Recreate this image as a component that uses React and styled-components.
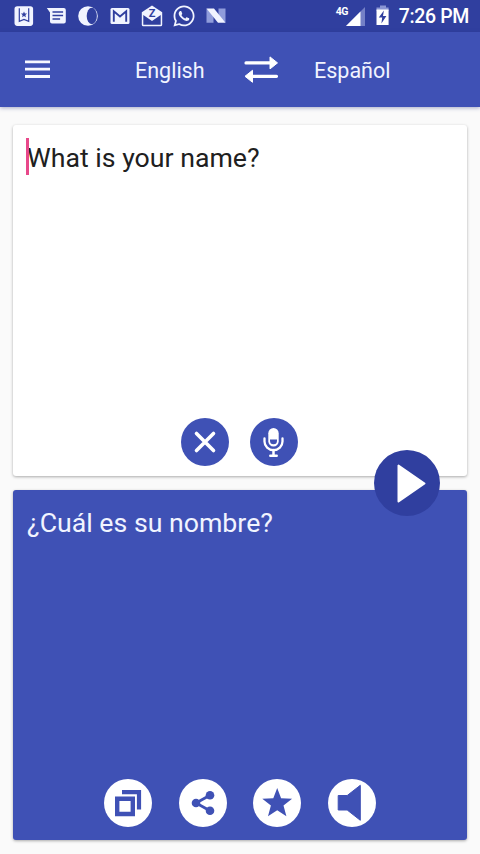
import React from 'react';
import styled, { createGlobalStyle } from 'styled-components';
import { FaWhatsapp } from 'react-icons/fa';

const primary = '#3f51b5';
const primaryDark = '#303f9f';

function StatusIcons() {
  return (
    <StyledStatusIcons>
      <svg width="32" height="32" viewBox="0 0 32 32">
        <rect x="6.5" y="6.3" width="18.6" height="19.6" rx="2.8" fill="#f1f4ff" />
        <path d="M11.3 8.200v13.200l4.700-2 4.700 2V8.200" fill="none" stroke={primaryDark} strokeWidth="1.200" />
        <path d="M16 11.400l.9 2 2.200.2-1.700 1.500.5 2.200-1.900-1.200-1.900 1.200.5-2.200-1.700-1.500 2.200-.2z" fill={primaryDark} />
      </svg>
      <svg width="32" height="32" viewBox="0 0 32 32">
        <path d="M6.800 8h17q2 0 2 2v11.400q0 2-2 2H12q-2 0-2-2V12.500z" fill="#f1f4ff" />
        <path d="M12.500 12.100h10.600M12.500 15.600h10.600M12.500 19h7.600" stroke={primaryDark} strokeWidth="1.500" />
      </svg>
      <svg width="32" height="32" viewBox="0 0 32 32">
        <circle cx="16" cy="16" r="9.800" fill="#f1f4ff" />
        <ellipse cx="19.800" cy="16" rx="5.100" ry="8.300" fill={primaryDark} />
      </svg>
      <svg width="32" height="32" viewBox="0 0 32 32">
        <rect x="6.500" y="8" width="19" height="16" rx="1.500" fill="#f1f4ff" />
        <path d="M9.800 21.800V11.200l6.200 5.200 6.200-5.200v10.600" fill="none" stroke={primaryDark} strokeWidth="1.900" />
      </svg>
      <svg width="32" height="32" viewBox="0 0 32 32">
        <path d="M5.800 12.300L16 5.500l10.200 6.800v12.500q0 1.500-1.500 1.500H7.300q-1.500 0-1.500-1.500z" fill="#f1f4ff" />
        <path d="M7.300 15L16 21l8.700-6v9.800H7.300z" fill={primaryDark} />
        <StyledBadgeText x="16" y="16.600" textAnchor="middle">Z</StyledBadgeText>
      </svg>
      <StyledIconSlot><FaWhatsapp size={24} /></StyledIconSlot>
      <svg width="32" height="32" viewBox="0 0 32 32">
        <path d="M6.500 8.500l7 5.200v9.100h-7zM18.500 8.500h7v14.300l-7-5.200z" fill="#8f9cdb" />
        <path d="M6.500 8.500h7.500l11.500 14.300H18z" fill="#f1f4ff" />
      </svg>
    </StyledStatusIcons>
  );
}

function StatusBar() {
  return (
    <StyledStatusBar>
      <StatusIcons />
      <StyledSystemInfo>
        <StyledNetwork>4G</StyledNetwork>
        <svg width="20" height="20" viewBox="0 0 20 20">
          <path d="M0 19L19 0v19z" fill="#7480c6" />
          <path d="M0 19L14.500 4.500V19z" fill="#fff" />
        </svg>
        <StyledBattery width="14" height="22" viewBox="0 0 14 22">
          <path d="M4 .5h6v2h2.600V6H.5V2.500H4z" fill="#8a95d3" />
          <path d="M.5 4.500h12.100V20H.5z" fill="#fff" />
          <path d="M7.900 5.500L2.800 12.500h3.400l-.8 6 5-7.500H7z" fill={primaryDark} />
        </StyledBattery>
        <StyledClock>7:26 PM</StyledClock>
      </StyledSystemInfo>
    </StyledStatusBar>
  );
}

function Toolbar() {
  return (
    <StyledToolbar>
      <StyledPlainButton aria-label="menu">
        <svg width="26" height="20" viewBox="0 0 26 20">
          <path d="M0 1.900h25M0 9.200h25M0 16.500h25" stroke="#f7f8ff" strokeWidth="2.800" />
        </svg>
      </StyledPlainButton>
      <StyledLanguage $width={70} $offset={84}>English</StyledLanguage>
      <StyledPlainButton $offset={39} aria-label="swap languages">
        <svg width="35" height="28" viewBox="0 0 35 28">
          <path d="M2 6.900H27M8 20.300h24.500" stroke="#fff" strokeWidth="3.200" strokeLinecap="round" />
          <path d="M26 .9L33.500 6.900l-7.500 6zM8.500 14.300l-7.500 6 7.500 6z" fill="#fff" stroke="#fff" strokeLinejoin="round" />
        </svg>
      </StyledPlainButton>
      <StyledLanguage $width={78} $offset={35}>Español</StyledLanguage>
    </StyledToolbar>
  );
}

function App() {
  return (
    <StyledScreen>
      <GlobalStyle />
      <StatusBar />
      <Toolbar />
      <StyledPanels>
        <StyledCard>
          <StyledPhrase $caret>What is your name?</StyledPhrase>
          <StyledActions $gap={21.5}>
            <StyledRound aria-label="clear">
              <svg width="48" height="48" viewBox="0 0 48 48">
                <path d="M15.500 15.500l17 17M32.500 15.500l-17 17" stroke="#fff" strokeWidth="3.600" strokeLinecap="round" />
              </svg>
            </StyledRound>
            <StyledRound aria-label="speak">
              <svg width="48" height="48" viewBox="0 0 48 48">
                <rect x="18.300" y="10" width="10.400" height="18.500" rx="5.200" fill="#fff" />
                <path d="M20 21.500h7v1.300a3.500 3.500 0 0 1-7 0z" fill={primary} />
                <path d="M14.500 20.500v3a9 8.600 0 0 0 18 0v-3" fill="none" stroke="#fff" strokeWidth="2.300" strokeLinecap="round" />
                <path d="M23.500 32v5M20.300 37.800h6.400" stroke="#fff" strokeWidth="2.500" strokeLinecap="round" />
              </svg>
            </StyledRound>
          </StyledActions>
          <StyledPlay aria-label="translate">
            <svg width="66" height="66" viewBox="0 0 66 66">
              <path d="M24.500 15.500v36L50.500 33.500z" fill="#fff" stroke="#fff" strokeWidth="2" strokeLinejoin="round" />
            </svg>
          </StyledPlay>
        </StyledCard>
        <StyledCard $filled>
          <StyledPhrase>¿Cuál es su nombre?</StyledPhrase>
          <StyledActions $gap={26.700}>
            <StyledRound $light aria-label="copy">
              <svg width="48" height="48" viewBox="0 0 48 48">
                <path d="M13.200 19.800h15.600v15.200H13.200z" fill="none" stroke={primary} strokeWidth="4.400" />
                <path d="M18 13.200h17v17.300" fill="none" stroke={primary} strokeWidth="4.200" />
              </svg>
            </StyledRound>
            <StyledRound $light aria-label="share">
              <svg width="48" height="48" viewBox="0 0 48 48">
                <path d="M31 16.300L17 24l14 7.700" fill="none" stroke={primary} strokeWidth="2.800" />
                <circle cx="31" cy="16.300" r="4.300" fill={primary} />
                <circle cx="17" cy="24" r="4.300" fill={primary} />
                <circle cx="31" cy="31.700" r="4.300" fill={primary} />
              </svg>
            </StyledRound>
            <StyledRound $light aria-label="favorite">
              <svg width="48" height="48" viewBox="0 0 48 48">
                <path d="M24.200 8.900l3.900 10.300 11 .5-8.600 6.900 2.900 10.700-9.200-6.100-9.200 6.100 2.900-10.700-8.600-6.900 11-.5z" fill={primary} />
              </svg>
            </StyledRound>
            <StyledRound $light aria-label="listen">
              <svg width="48" height="48" viewBox="0 0 48 48">
                <path d="M10.200 16.500h9L32.300 6.300v35L19.200 31h-9z" fill={primary} stroke={primary} strokeLinejoin="round" />
              </svg>
            </StyledRound>
          </StyledActions>
        </StyledCard>
      </StyledPanels>
    </StyledScreen>
  );
}

const GlobalStyle = createGlobalStyle`
  * {
    box-sizing: border-box;
  }
  body {
    margin: 0;
    background: #fafafa;
    font-family: Roboto, sans-serif;
  }
  button {
    padding: 0;
    border: 0;
    background: none;
    font: inherit;
  }
  svg {
    display: block;
    flex: none;
  }
`;

const StyledScreen = styled.div`
  width: 480px;
  height: 854px;
  display: flex;
  flex-direction: column;
  overflow: hidden;
`;

const StyledStatusBar = styled.header`
  flex: none;
  height: 32px;
  padding: 0 11px 0 8px;
  display: flex;
  justify-content: space-between;
  background: ${primaryDark};
  color: #fff;
`;

const StyledStatusIcons = styled.div`
  display: flex;
`;

const StyledIconSlot = styled.div`
  width: 32px;
  height: 32px;
  display: flex;
  align-items: center;
  justify-content: center;
  color: #f1f4ff;
`;

const StyledBadgeText = styled.text`
  font: 700 11px Roboto, sans-serif;
  fill: ${primaryDark};
`;

const StyledSystemInfo = styled.div`
  display: flex;
  align-items: flex-start;
  padding-top: 5px;

  svg {
    margin-top: 2px;
  }
`;

const StyledNetwork = styled.span`
  margin-right: -2px;
  font-size: 10.5px;
  font-weight: 700;
  letter-spacing: -0.6px;
  line-height: 13px;
`;

const StyledBattery = styled.svg`
  && {
    margin: 0 9px 0 10px;
  }
`;

const StyledClock = styled.span`
  font-size: 19.5px;
  font-weight: 500;
  letter-spacing: -0.35px;
  line-height: 23px;
`;

const StyledToolbar = styled.nav`
  position: relative;
  flex: none;
  height: 75px;
  padding-left: 25px;
  display: flex;
  align-items: center;
  background: ${primary};
  box-shadow: 0 1px 4px rgba(40, 50, 120, 0.4);
`;

const StyledPlainButton = styled.button`
  margin-left: ${props => props.$offset || 0}px;
`;

const StyledLanguage = styled.span`
  width: ${props => props.$width}px;
  margin-left: ${props => props.$offset}px;
  padding-top: 2px;
  color: #f1f4ff;
  font-size: 21.5px;
  line-height: 28px;
  white-space: nowrap;
`;

const StyledPanels = styled.main`
  flex: 1;
  padding: 18px 13px 14px;
  display: grid;
  grid-template-rows: 351px 350px;
  gap: 14px;
`;

const StyledCard = styled.section`
  position: relative;
  z-index: ${props => (props.$filled ? 0 : 1)};
  padding: 13px ${props => (props.$filled ? 14 : 15)}px ${props => (props.$filled ? 13 : 10.5)}px 14px;
  display: flex;
  flex-direction: column;
  justify-content: space-between;
  border-radius: 3px;
  background: ${props => (props.$filled ? primary : '#fff')};
  color: ${props => (props.$filled ? '#f1f4ff' : '#202020')};
  box-shadow: 0 1px 3px rgba(0, 0, 0, 0.32);
`;

const StyledPhrase = styled.div`
  position: relative;
  height: 38px;
  padding-top: 1px;
  font-size: 26.700px;
  line-height: 38px;
  white-space: nowrap;

  &::before {
    content: '';
    display: ${props => (props.$caret ? 'block' : 'none')};
    position: absolute;
    left: -1px;
    top: 0;
    width: 3px;
    height: 37px;
    background: #e8488a;
  }
`;

const StyledActions = styled.div`
  display: flex;
  justify-content: center;
  gap: ${props => props.$gap}px;
`;

const StyledRound = styled.button`
  width: 48px;
  height: 48px;
  flex: none;
  border-radius: 50%;
  background: ${props => (props.$light ? '#fff' : primary)};
`;

// floats over the seam between the two cards
const StyledPlay = styled.button`
  position: absolute;
  right: 27px;
  bottom: -40px;
  width: 66px;
  height: 66px;
  border-radius: 50%;
  background: ${primaryDark};
`;

export default App;
